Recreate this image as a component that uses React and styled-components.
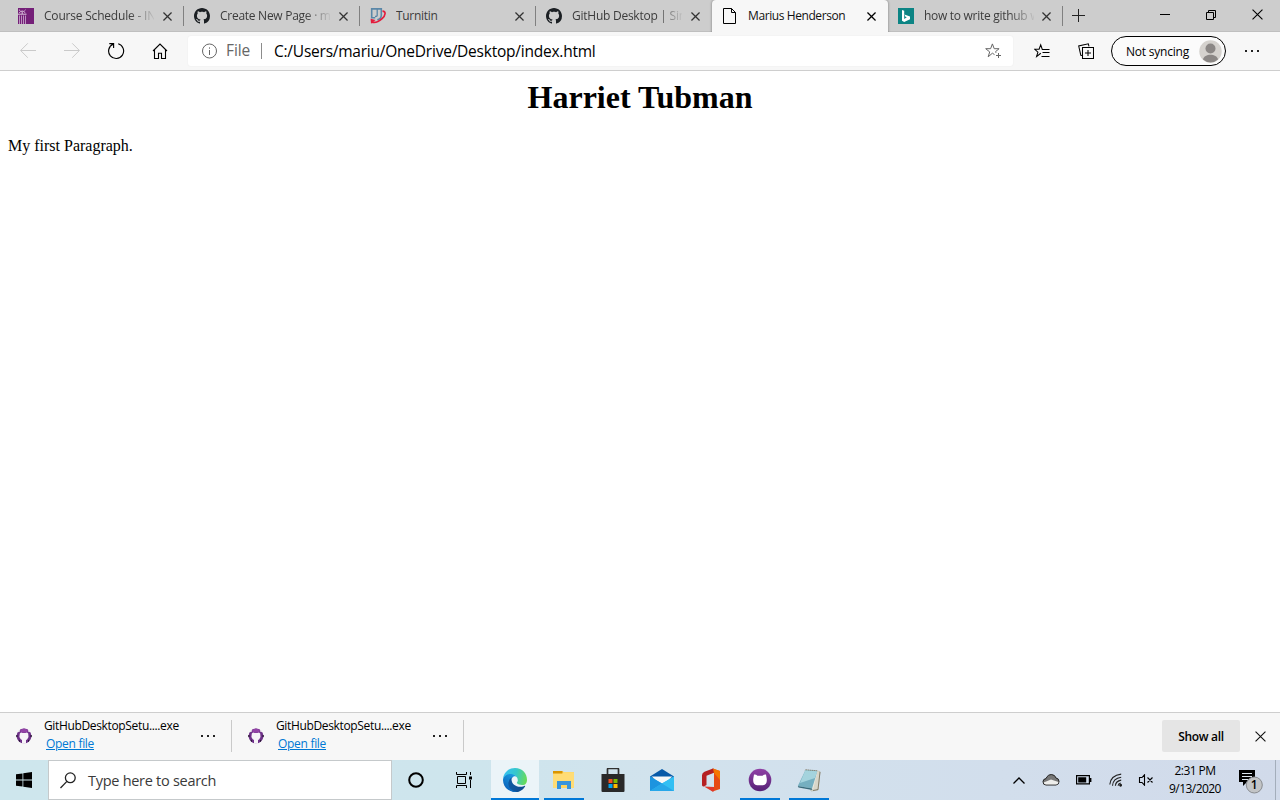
import React from "react";
import styled, { createGlobalStyle } from "styled-components";

const Global = createGlobalStyle`
  * { box-sizing: border-box; }
  html, body { margin: 0; padding: 0; background: #fff; overflow: hidden; }
  svg { display: block; flex: none; }
`;

const Screen = styled.div`
  width: 1280px;
  height: 800px;
  display: flex;
  flex-direction: column;
  font-family: "Open Sans", "Noto Sans", sans-serif;
  font-size: 12px;
  color: #000;
  overflow: hidden;
`;

const Label = styled.span`
  white-space: nowrap;
  font-size: ${(p) => p.$size || 12}px;
  letter-spacing: ${(p) => p.$track || 0}px;
  color: ${(p) => p.$color || "#000"};
  font-weight: ${(p) => p.$weight || 400};
`;

/* Tab strip */
const TabStrip = styled.header`
  height: 32px;
  padding-left: 8px;
  display: flex;
  background: #cdcdcd;
  box-shadow: inset 0 -1px 0 #bfbfbf;
`;

const Tab = styled.div`
  width: ${(p) => (p.$last ? 175 : 176)}px;
  height: 32px;
  padding: 0 10px;
  display: flex;
  align-items: center;
  flex: none;
  border-radius: 4px 4px 0 0;
  background: ${(p) => (p.$active ? "#f7f7f7" : "transparent")};
  box-shadow: ${(p) => (p.$active ? "0 0 2px 1px rgba(0,0,0,.2)" : "none")};
`;

const TabTitle = styled.div`
  width: 110px;
  margin-left: 10px;
  overflow: hidden;
  line-height: 18px;
  mask-image: ${(p) => (p.$fade ? "linear-gradient(90deg, #000 85px, transparent 112px)" : "none")};
`;

const TabClose = styled.div`
  width: 9px;
  margin-left: ${(p) => (p.$last ? 8 : 9)}px;
`;

const TabDivider = styled.i`
  width: 1px;
  height: 20px;
  margin-left: ${(p) => (p.$last ? 11 : 11)}px;
  margin-right: -12px;
  flex: none;
  background: #808080;
`;

const NewTab = styled.div`
  width: 30px;
  height: 31px;
  display: grid;
  place-items: center;
`;

const WindowButtons = styled.div`
  margin-left: auto;
  height: 29px;
  display: flex;
`;

const WindowButton = styled.div`
  width: 46px;
  display: grid;
  place-items: center;
`;

/* Toolbar */
const Toolbar = styled.nav`
  height: 39px;
  padding: 4px 6px;
  display: flex;
  background: #f7f7f7;
  border-bottom: 1px solid #cecece;
`;

const ToolButton = styled.div`
  width: ${(p) => p.$w || 44}px;
  height: 30px;
  display: grid;
  place-items: center;
  flex: none;
`;

const AddressBar = styled.div`
  width: 825px;
  height: 30px;
  margin: 0 7px 0 6px;
  padding: 0 12px 0 13px;
  display: flex;
  align-items: center;
  border-radius: 3px;
  background: #fff;
  box-shadow: 0 0 2px rgba(0, 0, 0, 0.06);
`;

const AddressDivider = styled.i`
  width: 1px;
  height: 16px;
  margin: 0 12px 0 9px;
  background: #8c8c8c;
`;

const AddressStar = styled.div`
  margin-left: auto;
`;

const Scheme = styled.div`
  width: 26px;
  margin-left: 8px;
  line-height: 24px;
`;

const Profile = styled.div`
  width: 115px;
  height: 30px;
  margin: 0 4px 0 3px;
  padding: 0 3px 0 14px;
  display: flex;
  align-items: center;
  justify-content: space-between;
  border: 1px solid #000;
  border-radius: 15px;
  background: #fbfbfb;
`;

/* Page */
const Page = styled.main`
  height: 641px;
  padding: 8px;
  background: #fff;
  font-family: "Liberation Serif", serif;
`;

const Heading = styled.h1`
  margin: 0 0 21px;
  font-size: 32px;
  line-height: 37px;
  font-weight: 700;
  text-align: center;
`;

const Paragraph = styled.p`
  margin: 0;
  font-size: 16px;
  line-height: 18px;
`;

/* Downloads */
const DownloadBar = styled.section`
  height: 48px;
  padding-bottom: 1px;
  display: flex;
  align-items: center;
  background: #f7f7f7;
  border-top: 1px solid #cecece;
`;

const Download = styled.div`
  width: 232px;
  height: 32px;
  padding-left: 16px;
  display: flex;
  align-items: center;
  border-right: 1px solid #cacaca;
`;

const DownloadText = styled.div`
  width: 148px;
  margin-left: 12px;
  margin-top: -2px;
  display: flex;
  flex-direction: column;
  line-height: 18px;
`;

const OpenLink = styled.a`
  align-self: flex-start;
  margin-left: 2px;
  font-size: 12px;
  letter-spacing: -0.3px;
  color: #0078d4;
  text-decoration: underline;
`;

const ShowAll = styled.div`
  width: 78px;
  height: 32px;
  margin-left: auto;
  display: grid;
  place-items: center;
  border-radius: 2px;
  background: #e5e5e5;
`;

const DownloadClose = styled.div`
  width: 40px;
  display: grid;
  place-items: center;
`;

/* Taskbar */
const Taskbar = styled.footer`
  height: 40px;
  display: flex;
  background: linear-gradient(90deg, #cee6ed 0, #cee5ed 480px, #d2e2ed 700px, #d2deec 1000px, #d1daea 1280px);
`;

const TaskCell = styled.div`
  width: 48px;
  height: 40px;
  display: grid;
  place-items: center;
  flex: none;
`;

const SearchBox = styled.div`
  width: 344px;
  height: 40px;
  padding-left: 11px;
  display: flex;
  align-items: center;
  gap: 12px;
  border: 1px solid #c5c9cb;
  background: #fff;
`;

const Apps = styled.div`
  margin-left: 3px;
  display: flex;
  gap: 1px;
`;

const AppCell = styled.div`
  width: 48px;
  height: 40px;
  padding-top: 2px;
  display: grid;
  grid-template-rows: 36px 2px;
  place-items: center;
  background: ${(p) => (p.$active ? "#ebf4f8" : "transparent")};
`;

const Running = styled.i`
  width: ${(p) => (p.$wide ? 48 : 40)}px;
  height: 2px;
  background: #0078d7;
`;

const Tray = styled.div`
  margin-left: auto;
  display: flex;
  align-items: center;
`;

const TrayCell = styled.div`
  width: ${(p) => p.$w}px;
  display: grid;
  place-items: center;
`;

const Clock = styled.div`
  width: 70px;
  display: flex;
  flex-direction: column;
  align-items: center;
  line-height: 18px;
  padding-bottom: 1px;
`;

const ActionCell = styled.div`
  width: 45px;
  padding: 2px 0 0 8px;
`;

const PeekLine = styled.i`
  width: 1px;
  height: 40px;
  margin-right: 4px;
  background: #a4aebb;
`;

const Cross = ({ size = 9, w = 1.4, color = "#333" }) => (
  <svg width={size} height={size} viewBox="0 0 10 10">
    <path d="M.5.5 9.5 9.5M9.5.5.5 9.5" stroke={color} strokeWidth={w} fill="none" />
  </svg>
);

const Dots = () => (
  <svg width="16" height="4" viewBox="0 0 16 4" fill="#222">
    <path d="M1 1h2v2H1zM7 1h2v2H7zM13 1h2v2h-2z" />
  </svg>
);

const CourseIcon = () => (
  <svg width="16" height="16" viewBox="0 0 16 16">
    <path fill="#741f78" d="M0 0h16v16H0z" />
    <path d="M1.5 16V7.5M3.5 16V7.5M5.5 16V7.5M7.5 16V7.5" stroke="#cdb0d2" strokeWidth=".8" fill="none" />
    <path d="M0 6.2h8.5M1.2 4.8Q4.2 1.3 7.3 4.8M4.2 3.5V6M1 1.8l1.3.9M7.5 1.8l-1 .9" stroke="#e8d8eb" strokeWidth=".9" fill="none" />
  </svg>
);

const GithubIcon = () => (
  <svg width="16" height="16" viewBox="0 0 16 16" fill="#1b1f23">
    <path d="M8 0C3.58 0 0 3.58 0 8c0 3.54 2.29 6.53 5.47 7.59.4.07.55-.17.55-.38 0-.19-.01-.82-.01-1.49-2.01.37-2.53-.49-2.69-.94-.09-.23-.48-.94-.82-1.13-.28-.15-.68-.52-.01-.53.63-.01 1.08.58 1.23.82.72 1.21 1.87.87 2.33.66.07-.52.28-.87.51-1.07-1.78-.2-3.64-.89-3.64-3.95 0-.87.31-1.59.82-2.15-.08-.2-.36-1.02.08-2.12 0 0 .67-.21 2.2.82.64-.18 1.32-.27 2-.27s1.36.09 2 .27c1.53-1.04 2.2-.82 2.2-.82.44 1.1.16 1.92.08 2.12.51.56.82 1.27.82 2.15 0 3.07-1.87 3.75-3.65 3.95.29.25.54.73.54 1.48 0 1.07-.01 1.93-.01 2.2 0 .21.15.46.55.38A8.01 8.01 0 0 0 16 8c0-4.42-3.58-8-8-8Z" />
  </svg>
);

const TurnitinIcon = () => (
  <svg width="16" height="16" viewBox="0 0 16 16" fill="none">
    <path d="M5.2 9.8H1.7V.9h9.6v6.3q0 3.5-4 4.6" stroke="#5a87a8" strokeWidth="1.6" />
    <path d="M7.2 1v6.2q0 1.3-2.2 1.3" stroke="#5a87a8" strokeWidth="1.3" />
    <path d="M12.5 3.2c3.8 0 3.1 4.3-.4 7.4-3.4 3-7.2 4.5-10 3.5" stroke="#e31c3d" strokeWidth="1.7" />
    <path d="M.6 10.8 5.5 12 1 15.8Z" fill="#e31c3d" />
  </svg>
);

const FileIcon = () => (
  <svg width="16" height="16" viewBox="0 0 16 16" fill="none" stroke="#000" strokeWidth="1">
    <path d="M1.5.5h8l4 4v11h-12ZM9.5.5v4h4" />
  </svg>
);

const BingIcon = () => (
  <svg width="16" height="16" viewBox="0 0 16 16">
    <path d="M0 0h16v16H0z" fill="#0c8484" />
    <path d="m4 2 2.2.8v8.1l2.6-1.6-1.4-.6-.9-2.2 5.5 2v2.7L6.2 14 4 12.7Z" fill="#fff" />
  </svg>
);

const BackIcon = ({ flip }) => (
  <svg width="16" height="16" viewBox="0 0 16 16" fill="none" stroke="#cacaca" transform={flip ? "scale(-1 1)" : undefined}>
    <path d="M16 7.5H.8M7.8.3.6 7.5l7.2 7.2" />
  </svg>
);

const ReloadIcon = () => (
  <svg width="18" height="18" viewBox="0 0 18 18" fill="none" stroke="#000" strokeWidth="1.15">
    <path d="M11.2 1.8A7.5 7.5 0 1 1 6.2 2.1M2.3 1.6h4.3V6" />
  </svg>
);

const HomeIcon = () => (
  <svg width="16" height="18" viewBox="0 0 16 18" fill="none" stroke="#000" strokeWidth="1.1">
    <path d="M1 9 8 2l7 7M2.5 7.8v8.7h4v-5.3h3v5.3h4V7.8" />
  </svg>
);

const InfoIcon = () => (
  <svg width="17" height="17" viewBox="0 0 17 17" fill="none" stroke="#666">
    <circle cx="8.5" cy="8" r="7" />
    <path d="M8.5 7V12M8.5 4.4v1.3" />
  </svg>
);

const StarAdd = () => (
  <svg width="16" height="16" viewBox="0 0 16 16" fill="none" stroke="#666">
    <path d="M9.5 11.6 7.4 10.2 3.2 13.8 4.7 8.9.7 5.7h4.9L7.4.9l1.8 4.8h4.9L10.6 8.6l.4 1.2M13.5 10v5M11 12.5h5" />
  </svg>
);

const Favorites = () => (
  <svg width="16" height="16" viewBox="0 0 16 16" fill="none" stroke="#000" strokeWidth="1.05">
    <path d="M6.8 10.8 6.4 10.5 2.6 13.6 3.9 9.2.7 6.3h4.4L6.7 1.8l1.6 4.7H15.5M8.5 9.5h7M7.5 13.5h8" />
  </svg>
);

const Collections = () => (
  <svg width="16" height="16" viewBox="0 0 16 16" fill="none" stroke="#000" strokeWidth="1.05">
    <path d="M4 12.5 2.8 12.2.7 3 10.3.8l.7 2.6M4.5 4.5h11v11h-11zM10 7v6M7 10h6" />
  </svg>
);

const Avatar = () => (
  <svg width="23" height="23" viewBox="0 0 23 23">
    <circle cx="11.5" cy="11.5" r="11.2" fill="#d5d2ce" />
    <circle cx="11.5" cy="8.5" r="5" fill="#8b8785" />
    <path d="M4 19.5c1.2-6.3 13.8-6.3 15 0a11 11 0 0 1-15 0Z" fill="#8b8785" />
  </svg>
);

const InstallerIcon = () => (
  <svg width="16" height="16" viewBox="0 0 16 16">
    <circle cx="8" cy="8" r="7.4" fill="#6e3189" />
    <path d="M4 1.7 8 .4l4 1.3-1 3H5Z" fill="#9343a6" />
    <path d="M5 4.4 6.5 5h3L11 4.4l1.2 1.2.3 3.4-1.4 2.4-1.1.6v3.7H6V12l-1.3-.8L3.4 9l.4-3.4Z" fill="#f7f4f8" />
    <path d="M0 7.2 1.5 7v2L.4 9.2ZM14.5 7l1.5.2-.4 2-1.1-.2ZM2.5 12.5l1.5-.7v2.5ZM12 11.8l1.5.7-1.5 1.8Z" fill="#291733" />
    <path d="m2 2.8 1.6-1.1.3 1.8-1.6.8ZM12.4 1.7 14 2.8l-.3 1.5-1.6-.8Z" fill="#f7f7f7" />
  </svg>
);

const WindowsIcon = () => (
  <svg width="16" height="16" viewBox="0 0 16 16">
    <path d="M0 2.3 6.5 1.4v6.1H0ZM7.3 1.3 16 0v7.5H7.3ZM0 8.4h6.5v6.2L0 13.7ZM7.3 8.4H16V16l-8.7-1.3Z" />
  </svg>
);

const SearchIcon = () => (
  <svg width="16" height="17" viewBox="0 0 16 17" fill="none" stroke="#222" strokeWidth="1.3">
    <circle cx="10.3" cy="5.8" r="4.9" />
    <path d="M6.9 9.4.5 16" />
  </svg>
);

const CortanaIcon = () => (
  <svg width="18" height="18" viewBox="0 0 18 18">
    <circle cx="9" cy="9" r="6.8" fill="none" stroke="#000" strokeWidth="2" />
  </svg>
);

const TaskViewIcon = () => (
  <svg width="18" height="16" viewBox="0 0 18 16" fill="none" stroke="#000">
    <path d="M1.5 0v2.5h10V0M2.5 4.5h8v7h-8zM1.5 16v-2.5h10V16M15.5 0v3M15.5 8v8" />
    <path d="M14 4.5h3v3h-3z" fill="#000" stroke="none" />
  </svg>
);

const EdgeIcon = () => (
  <svg width="24" height="24" viewBox="0 0 256 256">
    <defs>
      <linearGradient id="edgeBase" x1="60" y1="177" x2="241" y2="177" gradientUnits="userSpaceOnUse">
        <stop stopColor="#0c59a4" />
        <stop offset="1" stopColor="#114a8b" />
      </linearGradient>
      <linearGradient id="edgeLeft" x1="150" y1="90" x2="45" y2="230" gradientUnits="userSpaceOnUse">
        <stop stopColor="#1b9de2" />
        <stop offset="1" stopColor="#0b65bd" />
      </linearGradient>
      <linearGradient id="edgeTop" x1="10" y1="60" x2="250" y2="120" gradientUnits="userSpaceOnUse">
        <stop stopColor="#35c1f1" />
        <stop offset=".5" stopColor="#36c7cb" />
        <stop offset="1" stopColor="#68dc58" />
      </linearGradient>
    </defs>
    <path fill="url(#edgeBase)" d="M231 190c-4 2-7 3-11 5a107 107 0 0 1-37 6c-50 0-92-34-92-78 0-12 7-23 17-29-45 2-57 49-57 77 0 78 72 86 87 86 9 0 22-3 30-5 28-10 52-29 67-55 3-4-1-9-4-7Z" />
    <path fill="url(#edgeLeft)" d="M106 241A79 79 0 0 1 111 93c3-2 8-4 15-4a31 31 0 0 1 25 12c3 5 6 11 6 18C157 85 115 55 75 55 28 55-1 95 0 131a128 128 0 0 0 168 118 75 75 0 0 1-62-8Z" />
    <path fill="url(#edgeTop)" d="M152 149c-1 2-4 4-4 9 0 4 3 8 7 11 22 15 63 13 63 13 34-4 38-43 38-57C256 60 206 0 128 0 43 0-1 69 0 130c0-35 36-65 79-65 35 0 79 21 79 68 0 6-3 12-6 16Z" />
  </svg>
);

const FolderIcon = () => (
  <svg width="22" height="20" viewBox="0 0 22 20">
    <path d="M0 1h9l2 1h10v16H0Z" fill="#ffd867" />
    <path d="M0 1h9.5v2.5H0Z" fill="#da9500" />
    <path d="M0 4h9l2-1.5h10V18H0Z" fill="#ffdc75" />
    <path d="M4 11h14v8h-4v-4H8v4H4Z" fill="#3794dc" />
    <path d="M8 15h6v3H8Z" fill="#ffd45f" />
  </svg>
);

const StoreIcon = () => (
  <svg width="24" height="24" viewBox="0 0 24 24">
    <path d="M6.5 7V1.3q0-.8.8-.8h9.4q.8 0 .8.8V7" fill="none" stroke="#303030" strokeWidth="1.7" />
    <path d="M.5 6h23v17q0 1-1 1h-21q-1 0-1-1Z" fill="#292929" />
    <path d="M7.5 11H11.5v4h-4z" fill="#f25022" />
    <path d="M12.5 11h4v4h-4z" fill="#7fba00" />
    <path d="M7.5 16h4v4h-4z" fill="#00a4ef" />
    <path d="M12.5 16h4v4h-4z" fill="#ffb900" />
  </svg>
);

const MailIcon = () => (
  <svg width="24" height="24" viewBox="0 0 24 24">
    <path d="M0 8.5 12 1l12 7.5v2H0Z" fill="#0759a8" />
    <path d="M1.5 8.5h21L13 16h-2Z" fill="#f5f7f8" />
    <path d="M0 8.5 12 15.5 24 8.5V23H0Z" fill="#29b6f2" />
    <path d="M12 15.5 24 23H0V8.5Z" fill="#1c94df" />
    <path d="M0 23 12 15.5 24 8.5V23Z" fill="#32bff3" />
    <path d="M12 15.5 24 23H0Z" fill="#27a7e9" />
  </svg>
);

const OfficeIcon = () => (
  <svg width="20" height="24" viewBox="0 0 20 24">
    <path d="M11.5.5 19 3v18l-7.5 2.5L9 21l4-2V5Z" fill="#e64a13" />
    <path d="M12 .5 3.5 3.8Q1 5 1 7.3V17q0 2 2.3 1.3L5.5 17V7.8l7.5-3V1Z" fill="#b51f22" />
    <path d="M3 18.5 13 19v4.2L11.5 23.5Z" fill="#df392b" />
    <path d="m12 .5 7 2.5v9l-6-7Z" fill="#f57600" />
  </svg>
);

const GithubDesktopIcon = () => (
  <svg width="24" height="24" viewBox="0 0 24 24">
    <defs>
      <linearGradient id="desktopPurple" x2="0" y2="1">
        <stop stopColor="#9041a6" />
        <stop offset="1" stopColor="#562276" />
      </linearGradient>
    </defs>
    <circle cx="12" cy="12" r="11.3" fill="url(#desktopPurple)" />
    <path d="M6 6.5q2-.3 3.5 1.3h5Q16 6.2 18 6.5l.7 4q.8 6-3.7 6.7H9Q4.5 16.5 5.3 10.5Z" fill="#fff" />
  </svg>
);

const NotepadIcon = () => (
  <svg width="24" height="24" viewBox="0 0 24 24">
    <path d="M8 2 23 3.5 21 22l-7 1Z" fill="#e9e9df" stroke="#a8a797" strokeWidth=".6" />
    <path d="M8.5 2 20.5 3 15 20.5.8 18Z" fill="#75afc0" />
    <path d="M8.5 2 20.5 3 18 10 3 15Z" fill="#a4d3dd" />
    <path d="M.8 18 15 20.5 15.4 22 1.5 19.5Z" fill="#386b7b" />
    <path d="M8.7 1.8 20.8 2.8" stroke="#71654f" strokeDasharray="1 1" />
    <path d="m20.5 3-4.6 19 6-1 1-17Z" fill="#d8d6c9" />
    <path d="m23 4-2 17.5-5 1" fill="none" stroke="#6d6650" strokeWidth=".8" />
  </svg>
);

const CloudIcon = () => (
  <svg width="18" height="14" viewBox="0 0 18 14">
    <path d="M4 12Q1 12 1 8.7 1 6 4 5.6 5.8 1.3 9.8 1.6 13 1.8 14 5q3 .4 3 3.5T14 12Z" fill="#777" stroke="#222" />
    <path d="m1.6 9.5 7.4-3L16.5 9Q16 11.5 14 11.5H4Q2 11.5 1.6 9.5Z" fill="#eeeeec" />
  </svg>
);

const BatteryIcon = () => (
  <svg width="16" height="10" viewBox="0 0 16 10">
    <path d="M.6.6h12.8v8.3H.6z" fill="none" stroke="#000" strokeWidth="1.2" />
    <path d="M2.2 2.2h8v5.2h-8zM14 3h1.4v4H14z" />
  </svg>
);

const WifiIcon = () => (
  <svg width="14" height="14" viewBox="0 0 14 14" fill="none" stroke="#222" strokeWidth="1.1">
    <path d="M.8 11.5Q1.7 2.4 12.2 1.1M3.5 12.7Q4 5.3 12.2 4.2M6.4 12.8Q6.7 8 12.2 7.1M9.1 12.8Q9.3 10.5 11.8 10" />
    <circle cx="11.6" cy="12.3" r=".9" fill="#111" />
  </svg>
);

const MuteIcon = () => (
  <svg width="16" height="12" viewBox="0 0 16 12" fill="none" stroke="#000" strokeWidth="1.1">
    <path d="M1.5 3.5H4L6.5.8v10.4L4 8.5H1.5ZM9.5 3.5l5 5M14.5 3.5l-5 5" />
  </svg>
);

const ActionIcon = () => (
  <svg width="26" height="26" viewBox="0 0 26 26">
    <path d="M1 2h16v12H9l-4 4v-4H1Z" />
    <path d="M4 5.5h10M4 8.5h10M4 11.5h6" stroke="#dce5ee" />
    <circle cx="16.3" cy="17" r="8" fill="#c2c4c6" stroke="#898c90" />
    <text x="16.2" y="21.3" textAnchor="middle" fontFamily="Open Sans" fontSize="12" fontWeight="600">1</text>
  </svg>
);

const tabs = [
  { title: "Course Schedule - IN", icon: CourseIcon, fade: true, divider: true, track: -0.2 },
  { title: "Create New Page · m", icon: GithubIcon, fade: true, divider: true, track: -0.27 },
  { title: "Turnitin", icon: TurnitinIcon, divider: true, track: -0.3 },
  { title: "GitHub Desktop | Sim", icon: GithubIcon, fade: true, track: -0.25 },
  { title: "Marius Henderson", icon: FileIcon, active: true, track: -0.41 },
  { title: "how to write github w", icon: BingIcon, fade: true, divider: true, track: -0.29 },
];

const apps = [
  { name: "edge", icon: EdgeIcon, active: true, running: true },
  { name: "explorer", icon: FolderIcon, running: true },
  { name: "store", icon: StoreIcon },
  { name: "mail", icon: MailIcon },
  { name: "office", icon: OfficeIcon },
  { name: "github", icon: GithubDesktopIcon, running: true },
  { name: "notepad", icon: NotepadIcon, running: true },
];

export default function App() {
  return (
    <Screen>
      <Global />
      <TabStrip>
        {tabs.map(({ title, icon: Icon, fade, divider, active, track }, i) => (
          <Tab key={title} $active={active} $last={i === 5}>
            <Icon />
            <TabTitle $fade={fade}>
              <Label $track={track} $color={active ? "#111" : "#3c3c3c"}>{title}</Label>
            </TabTitle>
            <TabClose $last={i === 5}><Cross color={active ? "#000" : "#333"} /></TabClose>
            {divider && <TabDivider />}
          </Tab>
        ))}
        <NewTab>
          <svg width="13" height="13" viewBox="0 0 13 13" stroke="#222"><path d="M0 6.5h13M6.5 0v13" /></svg>
        </NewTab>
        <WindowButtons>
          <WindowButton><svg width="10" height="10" stroke="#000"><path d="M0 4.5h10" /></svg></WindowButton>
          <WindowButton>
            <svg width="10" height="10" viewBox="0 0 10 10" fill="none" stroke="#000"><path d="M.5 2.5h7v7h-7zM2.5 2.5v-2h7v7h-2" /></svg>
          </WindowButton>
          <WindowButton><Cross size={11} w={1} color="#000" /></WindowButton>
        </WindowButtons>
      </TabStrip>
      <Toolbar>
        <ToolButton><BackIcon /></ToolButton>
        <ToolButton><BackIcon flip /></ToolButton>
        <ToolButton><ReloadIcon /></ToolButton>
        <ToolButton><HomeIcon /></ToolButton>
        <AddressBar>
          <InfoIcon />
          <Scheme><Label $size={15.5} $track={-0.1} $color="#666">File</Label></Scheme>
          <AddressDivider />
          <Label $size={15.5} $track={-0.23}>C:/Users/mariu/OneDrive/Desktop/index.html</Label>
          <AddressStar><StarAdd /></AddressStar>
        </AddressBar>
        <ToolButton><Favorites /></ToolButton>
        <ToolButton><Collections /></ToolButton>
        <Profile>
          <Label $track={-0.22}>Not syncing</Label>
          <Avatar />
        </Profile>
        <ToolButton><Dots /></ToolButton>
      </Toolbar>
      <Page>
        <Heading>Harriet Tubman</Heading>
        <Paragraph>My first Paragraph.</Paragraph>
      </Page>
      <DownloadBar>
        {[0, 1].map((n) => (
          <Download key={n}>
            <InstallerIcon />
            <DownloadText>
              <Label $track={-0.35}>GitHubDesktopSetu....exe</Label>
              <OpenLink>Open file</OpenLink>
            </DownloadText>
            <ToolButton $w={32}><Dots /></ToolButton>
          </Download>
        ))}
        <ShowAll><Label $track={-0.3} $weight={600}>Show all</Label></ShowAll>
        <DownloadClose><Cross size={11} w={1} color="#111" /></DownloadClose>
      </DownloadBar>
      <Taskbar>
        <TaskCell><WindowsIcon /></TaskCell>
        <SearchBox>
          <SearchIcon />
          <Label $size={14.5} $track={-0.28} $color="#3a3a3a">Type here to search</Label>
        </SearchBox>
        <TaskCell><CortanaIcon /></TaskCell>
        <TaskCell><TaskViewIcon /></TaskCell>
        <Apps>
          {apps.map(({ name, icon: Icon, active, running }) => (
            <AppCell key={name} $active={active}>
              <Icon />
              {running && <Running $wide={active} />}
            </AppCell>
          ))}
        </Apps>
        <Tray>
          <TrayCell $w={32}>
            <svg width="12" height="7" viewBox="0 0 12 7" fill="none" stroke="#000" strokeWidth="1.3"><path d="m.5 6.5 5.5-5.5 5.5 5.5" /></svg>
          </TrayCell>
          <TrayCell $w={32}><CloudIcon /></TrayCell>
          <TrayCell $w={33}><BatteryIcon /></TrayCell>
          <TrayCell $w={32}><WifiIcon /></TrayCell>
          <TrayCell $w={28}><MuteIcon /></TrayCell>
          <Clock>
            <Label $track={-0.55}>2:31 PM</Label>
            <Label $track={-0.55}>9/13/2020</Label>
          </Clock>
          <ActionCell><ActionIcon /></ActionCell>
          <PeekLine />
        </Tray>
      </Taskbar>
    </Screen>
  );
}
